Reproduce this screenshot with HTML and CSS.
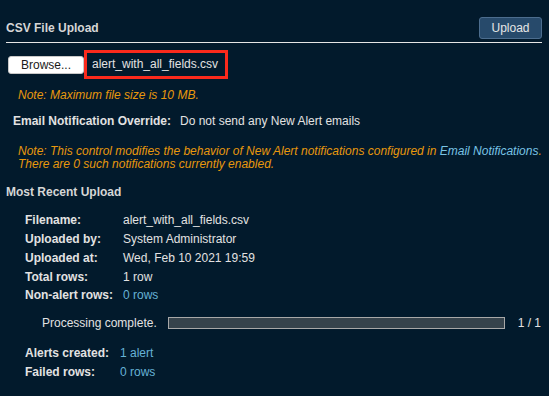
FILE: index.html
```html
<!DOCTYPE html>
<html lang="en">
<head>
  <meta charset="UTF-8" />
  <meta name="viewport" content="width=device-width, initial-scale=1.0" />
  <title>CSV File Upload</title>
  <link rel="stylesheet" href="styles.css">
</head>
<body>
  <div class="header">
    <h2>CSV File Upload</h2>
    <button class="btn-upload">Upload</button>
  </div>

  <div class="file-row">
    <button class="btn-browse">Browse...</button>
    <span class="file-name">alert_with_all_fields.csv</span>
  </div>
  <p class="note note-size">Note: Maximum file size is 10 MB.</p>

  <div class="override">
    <span class="label">Email Notification Override:</span>
    <span>Do not send any New Alert emails</span>
  </div>
  <p class="note note-override">Note: This control modifies the behavior of New Alert notifications configured in <a href="#">Email Notifications</a>.<br>There are 0 such notifications currently enabled.</p>

  <h3>Most Recent Upload</h3>
  <div class="details">
    <span class="label">Filename:</span><span>alert_with_all_fields.csv</span>
    <span class="label">Uploaded by:</span><span>System Administrator</span>
    <span class="label">Uploaded at:</span><span>Wed, Feb 10 2021 19:59</span>
    <span class="label">Total rows:</span><span>1 row</span>
    <span class="label">Non-alert rows:</span><a href="#">0 rows</a>
  </div>

  <div class="progress">
    <span class="progress-text">Processing complete.</span>
    <div class="bar"><div class="bar-fill" style="width: 100%"></div></div>
    <span class="progress-count">1 / 1</span>
  </div>

  <div class="details results">
    <span class="label">Alerts created:</span><a href="#">1 alert</a>
    <span class="label">Failed rows:</span><a href="#">0 rows</a>
  </div>
</body>
</html>
```

FILE: styles.css
```css
body {
  font-family: 'Liberation Sans', Arial, sans-serif;
  font-size: 12px;
  line-height: 14px;
  background: #021a2c;
  color: #e2e2e2;
  margin: 0;
}
a {
  color: #66b2d6;
  text-decoration: none;
}
.header {
  display: flex;
  justify-content: space-between;
  align-items: center;
  margin: 0 7px 0 6px;
  padding: 17px 0 3px;
  border-bottom: 1px solid #e6e6e6;
}
h2 {
  margin: 0;
  font-size: 12px;
  color: #d6d6d6;
}
.btn-upload {
  width: 63px;
  height: 22px;
  padding: 0;
  font: inherit;
  color: #e6e6e6;
  background: #274a6b;
  border: 1px solid #4c6d8e;
  border-radius: 3px;
}
.file-row {
  display: flex;
  align-items: center;
  margin: 7px 0 0 8px;
}
.btn-browse {
  width: 76px;
  height: 18px;
  padding: 0;
  font: inherit;
  color: #1a1a1a;
  background: #fff;
  border: 1px solid #c8c8c8;
  border-radius: 3px;
}
.file-name {
  box-sizing: border-box;
  width: 144px;
  height: 29px;
  padding-left: 5px;
  border: 3px solid #fa2a1c;
  line-height: 23px;
}
.note {
  margin: 0;
  padding-left: 18px;
  font-style: italic;
  color: #e8980c;
}
.note-size {
  margin-top: 9px;
}
.override {
  display: flex;
  margin-top: 12px;
  padding-left: 13px;
}
.override .label {
  width: 167px;
}
.label {
  font-weight: bold;
}
.note-override {
  margin-top: 17px;
  line-height: 13px;
}
.note-override a {
  color: #79c4e6;
}
h3 {
  margin: 14px 0 0 6px;
  font-size: 12px;
  color: #d6d6d6;
}
.details {
  display: grid;
  grid-template-columns: 98px auto;
  grid-auto-rows: 18.75px;
  align-items: center;
  margin-top: 12px;
  padding-left: 25px;
}
.progress {
  display: flex;
  align-items: center;
  height: 20px;
  margin-top: 8px;
  padding: 0 8px 0 42px;
}
.progress-text {
  width: 126px;
}
.bar {
  flex: 1;
  height: 12px;
  box-sizing: border-box;
  border: 1px solid #a8a8a8;
  background: #36434c;
}
.bar-fill {
  height: 100%;
  background: #36434c;
}
.progress-count {
  margin-left: 13px;
}
.results {
  grid-template-columns: 95px auto;
  grid-auto-rows: 19px;
  margin-top: 10.5px;
}
```
